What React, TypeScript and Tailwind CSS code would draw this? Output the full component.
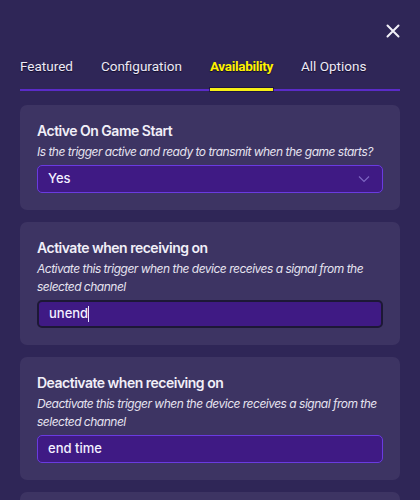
import React from "react";

const Card = ({ title, desc, value, kind }: { title: string; desc: string; value: string; kind: "select" | "focus" | "input" }) => (
  <div className="rounded-[7px] bg-[#3d3463] px-[17px] pt-[16px] pb-[17px]">
    <div className="text-[14px] leading-[20px] font-semibold text-[#f1eff8] tracking-[-0.5px]" style={{ fontFamily: "Inter, sans-serif" }}>{title}</div>
    <div className="mt-[2px] text-[12px] leading-[18px] italic text-[#e6e3f0] tracking-[-0.5px]" style={{ fontFamily: "Inter, sans-serif" }}>{desc}</div>
    <div
      className={
        "mt-[4px] h-[28px] rounded-[5px] flex items-center px-[10px] text-[13px] font-medium text-[#f3f0ff] " +
        (kind === "focus" ? "bg-[#3f1a84] border-2 border-[#1d1836]" : "bg-[#3f1a84] border border-[#6a3be0]")
      }
      style={{ fontFamily: "Inter, sans-serif" }}
    >
      <span className="flex-1">
        {value}
        {kind === "focus" && <span className="inline-block w-px h-[16px] bg-[#e8e4ff] align-middle -mt-[2px]" />}
      </span>
      {kind === "select" && (
        <svg width="12" height="8" viewBox="0 0 12 8" className="mr-[2px]">
          <path d="M1 1.5 L6 6.5 L11 1.5" fill="none" stroke="#7d66c2" strokeWidth="1.2" />
        </svg>
      )}
    </div>
  </div>
);

export default function App() {
  return (
    <div className="w-[420px] h-[500px] overflow-hidden bg-[#2f2657] relative">
      <div className="flex justify-end pt-[24px] pr-[20px] h-[46px]">
        <svg width="14" height="14" viewBox="0 0 14 14">
          <path d="M1.5 1.5 L12.5 12.5 M12.5 1.5 L1.5 12.5" stroke="#f2f0f8" strokeWidth="2" strokeLinecap="round" />
        </svg>
      </div>
      <div className="mx-[20px]">
        <div className="flex gap-[28px] text-[13.5px] text-[#eeeaf6] h-[43px] items-start pt-[10px]" style={{ fontFamily: "Roboto, sans-serif", textShadow: "0 1px 1px rgba(10,5,30,0.8)" }}>
          <span>Featured</span>
          <span>Configuration</span>
          <span className="text-[#fff200] font-bold tracking-[-0.3px] relative">
            Availability
            <span className="absolute left-0 right-0 top-[32px] h-[3px] bg-[#f5ee16] shadow-[0_0_0_1px_rgba(20,10,50,0.6)]" />
          </span>
          <span>All Options</span>
        </div>
        <div className="h-[2px] bg-[#5a2bc8]" />
      </div>
      <div className="mx-[20px] mt-[14px] flex flex-col gap-[12px]">
        <Card title="Active On Game Start" desc="Is the trigger active and ready to transmit when the game starts?" value="Yes" kind="select" />
        <Card title="Activate when receiving on" desc="Activate this trigger when the device receives a signal from the selected channel" value="unend" kind="focus" />
        <Card title="Deactivate when receiving on" desc="Deactivate this trigger when the device receives a signal from the selected channel" value="end time" kind="input" />
        <div className="rounded-[7px] bg-[#3d3463] h-[60px]" />
      </div>
    </div>
  );
}
